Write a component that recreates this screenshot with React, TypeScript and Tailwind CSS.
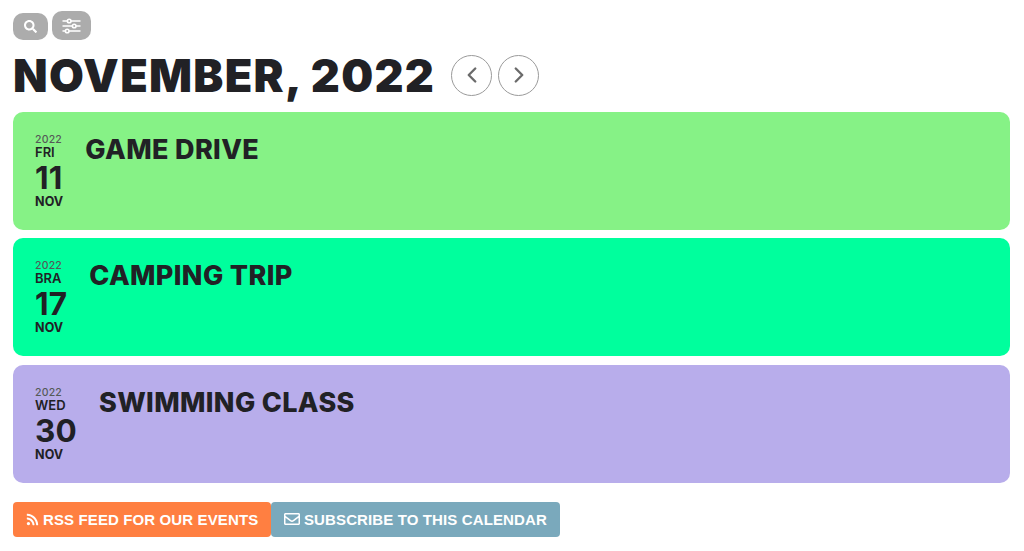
import React from "react";
import { ChevronLeft, ChevronRight } from "lucide-react";
import { FaSearch, FaRss, FaRegEnvelope } from "react-icons/fa";

const events = [
  { y: "2022", d: "FRI", n: "11", m: "NOV", t: "GAME DRIVE", bg: "bg-[#86f286]" },
  { y: "2022", d: "BRA", n: "17", m: "NOV", t: "CAMPING TRIP", bg: "bg-[#00ff9d]" },
  { y: "2022", d: "WED", n: "30", m: "NOV", t: "SWIMMING CLASS", bg: "bg-[#b8adeb]" },
];

export default function App() {
  return (
    <div className="w-[1024px] h-[551px] overflow-hidden bg-white px-[13px] pt-[11px] text-[#212125] font-['Inter','Liberation_Sans',sans-serif]">
      <div className="flex items-start gap-[4px] h-[30px]">
        <button className="mt-[2px] w-[35px] h-[27px] rounded-[10px] bg-[#acacac] flex items-center justify-center text-white">
          <FaSearch size={13} />
        </button>
        <button className="w-[39px] h-[29px] rounded-[10px] bg-[#acacac] flex items-center justify-center text-white">
          <svg width="19" height="16" viewBox="0 0 19 16" fill="none" stroke="currentColor" strokeWidth="1.6">
            <path d="M0.5 3h5M9 3h9.5M0.5 8h10M14 8h4.5M0.5 13h3M7 13h11.5" />
            <circle cx="7.2" cy="3" r="1.8" />
            <circle cx="12.2" cy="8" r="1.8" />
            <circle cx="5.2" cy="13" r="1.8" />
          </svg>
        </button>
      </div>
      <div className="flex items-center h-[60px] mt-[4px]">
        <h1 className="m-0 w-[438px] text-[45px] leading-none font-black tracking-[1.3px] whitespace-nowrap">NOVEMBER, 2022</h1>
        <button className="w-[41px] h-[41px] rounded-full border border-[#9a9a9a] flex items-center justify-center text-[#6b6b6b]">
          <ChevronLeft size={26} strokeWidth={2.2} />
        </button>
        <button className="ml-[6px] w-[41px] h-[41px] rounded-full border border-[#9a9a9a] flex items-center justify-center text-[#6b6b6b]">
          <ChevronRight size={26} strokeWidth={2.2} />
        </button>
      </div>
      <div className="mt-[7px] flex flex-col gap-[8.4px] w-[997px]">
        {events.map((e) => (
          <div key={e.t} className={`${e.bg} h-[118px] rounded-[10px] flex items-start pl-[22px] pt-[21px]`}>
            <div className="flex flex-col">
              <span className="text-[10.5px] leading-[13px] font-medium text-[#555a58] tracking-[0.2px]">{e.y}</span>
              <span className="text-[13px] leading-[13px] font-semibold">{e.d}</span>
              <span className="text-[31.5px] leading-[35px] font-bold tracking-[0.2px] mt-[1px]">{e.n}</span>
              <span className="text-[12.5px] leading-[13px] font-bold tracking-[0.1px]">{e.m}</span>
            </div>
            <div className="ml-[22px] text-[27px] leading-[34px] font-extrabold tracking-[0.35px] whitespace-nowrap">{e.t}</div>
          </div>
        ))}
      </div>
      <div className="mt-[19px] flex font-['Liberation_Sans',Arial,sans-serif] text-white text-[15px] font-bold tracking-[0.12px]">
        <a className="h-[35px] w-[258px] rounded-[4px] bg-[#ff7f41] flex items-center pl-[13px] gap-[4px] whitespace-nowrap">
          <FaRss size={13} />
          <span className="pt-[1px]">RSS FEED FOR OUR EVENTS</span>
        </a>
        <a className="h-[35px] w-[289px] rounded-[4px] bg-[#7aa9bc] flex items-center pl-[13px] gap-[4px] whitespace-nowrap">
          <FaRegEnvelope size={16} />
          <span className="pt-[1px]">SUBSCRIBE TO THIS CALENDAR</span>
        </a>
      </div>
    </div>
  );
}
